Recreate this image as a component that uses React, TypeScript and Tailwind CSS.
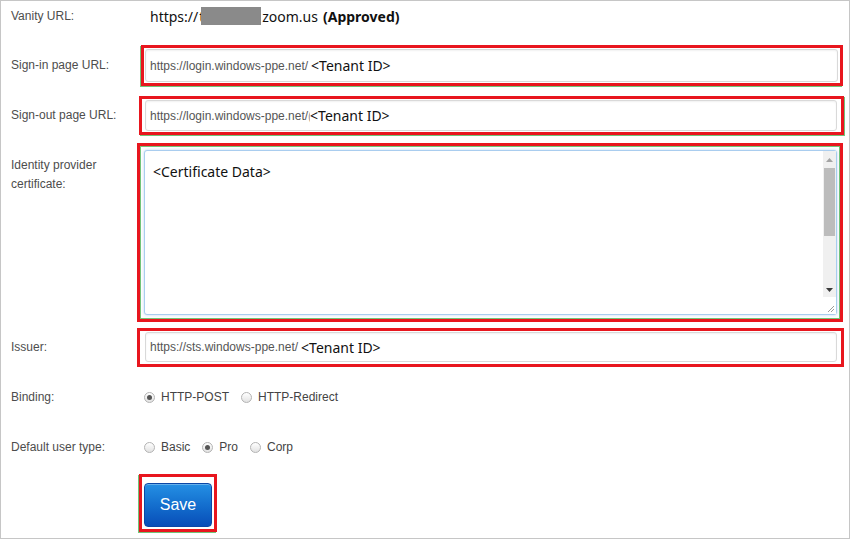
import React from "react";

const arial = { fontFamily: '"Liberation Sans", Arial, sans-serif' };
const noto = { fontFamily: '"Noto Sans", "Open Sans", sans-serif' };

function Label({ children, className = "" }: { children: React.ReactNode; className?: string }) {
  return (
    <div className={`w-[136px] shrink-0 pl-[10px] text-[12px] leading-[19px] text-[#4d4d4d] ${className}`} style={arial}>
      {children}
    </div>
  );
}

function UrlInput({ prefix, extra }: { prefix: string; extra?: boolean }) {
  return (
    <div className="flex h-full w-full items-center rounded-[3px] border border-[#d9d9d9] bg-white pl-[4px] shadow-[inset_0_1px_2px_rgba(0,0,0,0.06)]">
      <span className="text-[12px] text-[#555]" style={arial}>
        {prefix}
      </span>
      {extra ? (
        <span className="inline-block w-[2px] overflow-hidden text-[12px] text-[#999]" style={arial}>
          (
        </span>
      ) : (
        <span className="w-[3px]" />
      )}
      <span className="text-[14px] text-[#111]" style={noto}>
        &lt;Tenant ID&gt;
      </span>
    </div>
  );
}

function Radio({ checked, label }: { checked?: boolean; label: string }) {
  return (
    <div className="flex items-center">
      <span className="flex h-[11px] w-[11px] items-center justify-center rounded-full border border-[#b3b3b3] bg-gradient-to-b from-[#ffffff] to-[#e2e2e2]">
        {checked && <span className="h-[5px] w-[5px] rounded-full bg-[#555]" />}
      </span>
      <span className="ml-[6px] text-[12px] text-[#444]" style={arial}>
        {label}
      </span>
    </div>
  );
}

export default function App() {
  return (
    <div className="h-[540px] w-[851px] bg-white">
      <div className="flex h-[539px] w-[850px] flex-col border border-[#c6c6c6] bg-white">
        {/* Vanity URL */}
        <div className="flex h-[30px] items-center">
          <Label>Vanity URL:</Label>
          <div className="ml-[13px] flex items-center text-[14px] text-[#111]" style={noto}>
            <span>https://</span>
            <span className="ml-[1px] inline-block w-[2px] overflow-hidden">t</span>
            <span className="inline-block h-[18px] w-[60px] bg-[#8a8a8a]" />
            <span className="ml-[1px]">zoom.us</span>
            <span className="ml-[5px] font-bold">(Approved)</span>
          </div>
        </div>

        {/* Sign-in */}
        <div className="mt-[14px] flex h-[41px] items-center">
          <Label>Sign-in page URL:</Label>
          <div className="ml-[4px] h-[41px] w-[702px] border-[3px] border-[#e8161e] p-[1px] pr-[2px] shadow-[-1px_1px_0_#72c479]">
            <UrlInput prefix="https://login.windows-ppe.net/" />
          </div>
        </div>

        {/* Sign-out */}
        <div className="mt-[10px] flex h-[39px] items-center">
          <Label>Sign-out page URL:</Label>
          <div className="ml-[2px] h-[39px] w-[705px] border-[3px] border-[#e8161e] py-[1px] pl-[3px] pr-[4px] shadow-[1px_1px_0_#72c479]">
            <UrlInput prefix="https://login.windows-ppe.net/" extra />
          </div>
        </div>

        {/* Certificate */}
        <div className="mt-[8px] flex h-[179px]">
          <Label className="pt-[13px]">
            Identity provider
            <br />
            certificate:
          </Label>
          <div className="h-[179px] w-[706px] border-[3px] border-[#e8161e] p-[4px] pr-[3px] shadow-[inset_0_0_0_1px_#72c479]">
            <div className="flex h-full w-full rounded-[3px] border border-[#a9cdef] bg-white shadow-[0_0_3px_rgba(120,170,230,0.5)]">
              <div className="flex-1 pl-[8px] pt-[11px] text-[14px] leading-[20px] text-[#111]" style={noto}>
                &lt;Certificate Data&gt;
              </div>
              <div className="flex w-[13px] flex-col bg-[#f0f0f0]">
                <div className="flex h-[17px] items-center justify-center">
                  <svg width="7" height="4" viewBox="0 0 7 4">
                    <path d="M0 4 L3.5 0 L7 4 Z" fill="#a3a3a3" />
                  </svg>
                </div>
                <div className="mx-[1px] h-[68px] bg-[#bcbcbc]" />
                <div className="flex-1" />
                <div className="flex h-[14px] items-center justify-center">
                  <svg width="7" height="4" viewBox="0 0 7 4">
                    <path d="M0 0 L7 0 L3.5 4 Z" fill="#3a3a3a" />
                  </svg>
                </div>
                <div className="flex h-[17px] items-end justify-end bg-white pb-[1px] pr-[1px]">
                  <svg width="8" height="8" viewBox="0 0 8 8">
                    <path d="M7 1 L1 7 M7 4 L4 7" stroke="#9a9a9a" strokeWidth="1" />
                  </svg>
                </div>
              </div>
            </div>
          </div>
        </div>

        {/* Issuer */}
        <div className="mt-[6px] flex h-[39px] items-center">
          <Label>Issuer:</Label>
          <div className="h-[39px] w-[707px] border-[3px] border-[#e8161e] pb-[2px] pl-[5px] pr-[4px] pt-[1px]">
            <UrlInput prefix="https://sts.windows-ppe.net/" />
          </div>
        </div>

        {/* Binding */}
        <div className="mt-[13px] flex h-[34px] items-center">
          <Label>Binding:</Label>
          <div className="ml-[7px] flex items-center gap-[12px]">
            <Radio checked label="HTTP-POST" />
            <Radio label="HTTP-Redirect" />
          </div>
        </div>

        {/* Default user type */}
        <div className="mt-[16px] flex h-[34px] items-center">
          <Label>Default user type:</Label>
          <div className="ml-[7px] flex items-center gap-[12px]">
            <Radio label="Basic" />
            <Radio checked label="Pro" />
            <Radio label="Corp" />
          </div>
        </div>

        {/* Save */}
        <div className="mt-[10px] flex">
          <div className="w-[136px] shrink-0" />
          <div className="ml-[2px] h-[58px] w-[78px] border-[3px] border-[#e8161e] px-[2px] pb-[2px] pt-[6px] shadow-[-1px_1px_0_#72c479]">
            <button
              className="flex h-[44px] w-[68px] items-center justify-center rounded-[4px] border border-[#0b47a6] bg-gradient-to-b from-[#2590e4] to-[#0a4db8] text-[16px] text-white shadow-[inset_0_1px_0_rgba(255,255,255,0.3)]"
              style={arial}
            >
              Save
            </button>
          </div>
        </div>
      </div>
    </div>
  );
}
